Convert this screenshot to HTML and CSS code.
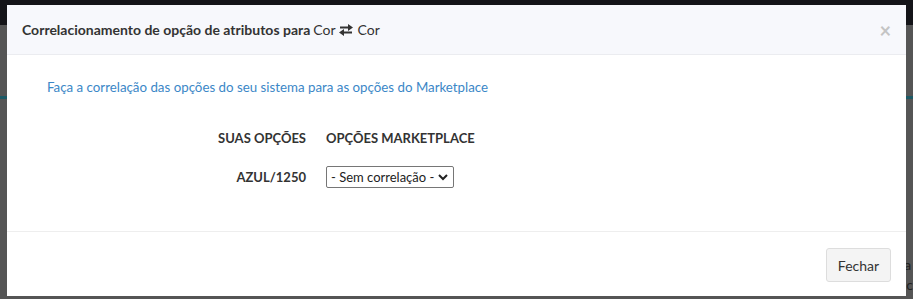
FILE: index.html
```html
<!DOCTYPE html>
<html lang="pt-BR">
<head>
  <meta charset="UTF-8">
  <title>Correlacionamento de opção de atributos</title>
  <link rel="stylesheet" href="styles.css">
</head>
<body>
  <div class="navbar"></div>
  <div class="page">
    <div class="page-line"></div>
    <p class="behind">ra<br>ac</p>
  </div>

  <div class="modal">
    <div class="modal-header">
      <h4 class="modal-title">
        <b>Correlacionamento de opção de atributos para</b> Cor
        <svg class="swap" viewBox="0 0 14 12" width="14" height="12">
          <path d="M1 3.5h9M4 8.5h9" fill="none" stroke="#333" stroke-width="2"/>
          <path d="M9 0l5 3.5L9 7zM5 5L0 8.5 5 12z" fill="#333"/>
        </svg>
        Cor
      </h4>
      <span class="close">&times;</span>
    </div>

    <div class="modal-body">
      <p class="hint">Faça a correlação das opções do seu sistema para as opções do Marketplace</p>
      <div class="options">
        <div class="th right">SUAS OPÇÕES</div>
        <div class="th">OPÇÕES MARKETPLACE</div>
        <div class="td right">AZUL/1250</div>
        <div class="td">
          <div class="select">
            <span>- Sem correlação -</span>
            <svg viewBox="0 0 10 8" width="10" height="8">
              <path d="M1 2l4 4 4-4" fill="none" stroke="#222" stroke-width="2"/>
            </svg>
          </div>
        </div>
      </div>
    </div>

    <div class="modal-footer">
      <button class="btn">Fechar</button>
    </div>
  </div>
</body>
</html>
```

FILE: styles.css
```css
body {
  margin: 0;
  font-family: Lato, "Open Sans", sans-serif;
  font-size: 14px;
  color: #333;
  background: #555;
  height: 299px;
  overflow: hidden;
}
.navbar {
  height: 25px;
  background: #141418;
}
.page {
  position: relative;
  height: 274px;
  overflow: hidden;
  padding-top: 71px;
  box-sizing: border-box;
}
.page-line {
  height: 3px;
  background: #1d5a66;
}
.behind {
  position: absolute;
  right: 0;
  top: 230px;
  margin: 0;
  font-size: 14px;
  line-height: 20px;
  color: #222;
}
.modal {
  position: fixed;
  top: 5px;
  left: 7px;
  width: 899px;
  height: 291px;
  background: #fff;
  display: flex;
  flex-direction: column;
}
.modal-header {
  height: 49px;
  padding: 0 15px;
  background: #f7f8fc;
  border-bottom: 1px solid #ebecf0;
  display: flex;
  align-items: center;
  justify-content: space-between;
}
.modal-title {
  margin: 0;
  font-size: 14px;
  font-weight: normal;
  display: flex;
  align-items: center;
  gap: 3px;
}
.modal-title b {
  font-weight: bold;
}
.swap {
  margin: 0 1px;
}
.close {
  font-size: 20px;
  font-weight: bold;
  color: #c4c4c4;
  line-height: 1;
}
.modal-body {
  flex: 1;
  padding: 24px 40px 0;
  border-bottom: 1px solid #eeeeee;
}
.hint {
  margin: 0 0 35px;
  color: #3b87c7;
  font-size: 13.3px;
}
.options {
  display: grid;
  grid-template-columns: 259px auto;
  column-gap: 20px;
  row-gap: 20px;
  justify-content: start;
  align-items: center;
}
.th {
  font-weight: bold;
  font-size: 13px;
  color: #333;
}
.td {
  font-weight: bold;
  font-size: 13px;
}
.right {
  text-align: right;
}
.select {
  display: inline-flex;
  align-items: center;
  gap: 4px;
  height: 20px;
  padding: 0 5px 0 4px;
  border: 1px solid #767676;
  border-radius: 2px;
  font-weight: normal;
  font-size: 13px;
  color: #222;
}
.modal-footer {
  height: 64px;
  display: flex;
  align-items: center;
  justify-content: flex-end;
  padding: 0 15px;
}
.btn {
  font-family: inherit;
  font-size: 14px;
  color: #333;
  background: #f4f4f4;
  border: 1px solid #dddddd;
  border-radius: 3px;
  width: 65px;
  height: 34px;
  margin-top: 2px;
}
```
